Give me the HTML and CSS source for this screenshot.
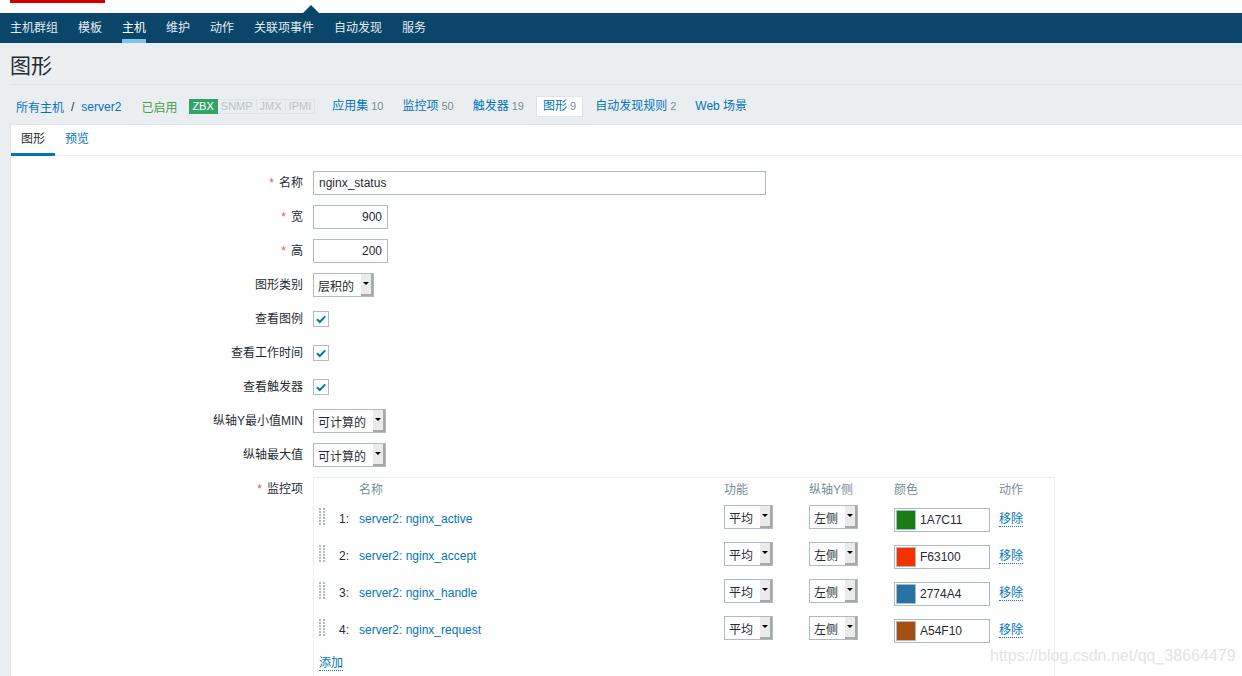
FILE: index.html
```html
<!DOCTYPE html>
<html lang="zh-CN">
<head>
<meta charset="utf-8">
<title>图形</title>
<link rel="stylesheet" href="styles.css">
</head>
<body>
<header class="topbar"><div class="brand-bar"></div><span class="tip"></span></header>
<nav class="mainnav">
  <a>主机群组</a><a>模板</a><a class="active">主机</a><a>维护</a><a>动作</a><a>关联项事件</a><a>自动发现</a><a>服务</a>
</nav>
<main class="page">
  <h1 class="title">图形</h1>
  <div class="crumbs">
    <a class="link">所有主机</a><span class="sep">/</span><a class="link">server2</a>
    <span class="status">已启用</span>
    <span class="avail"><span class="zbx">ZBX</span><span>SNMP</span><span>JMX</span><span>IPMI</span></span>
    <a class="citem first">应用集<span class="count">10</span></a>
    <a class="citem">监控项<span class="count">50</span></a>
    <a class="citem">触发器<span class="count">19</span></a>
    <span class="citem selected">图形<span class="count">9</span></span>
    <a class="citem">自动发现规则<span class="count">2</span></a>
    <a class="citem">Web 场景</a>
  </div>
  <section class="panel">
    <div class="tabs"><span class="tab active">图形</span><a class="tab link">预览</a></div>
    <div class="form">
      <div class="lbl"><span class="req">*</span>名称</div>
      <div class="field"><span class="input w453">nginx_status</span></div>

      <div class="lbl"><span class="req">*</span>宽</div>
      <div class="field"><span class="input w75 num">900</span></div>

      <div class="lbl"><span class="req">*</span>高</div>
      <div class="field"><span class="input w75 num">200</span></div>

      <div class="lbl">图形类别</div>
      <div class="field"><span class="select w61"><span class="val">层积的</span><span class="btn"></span></span></div>

      <div class="lbl">查看图例</div>
      <div class="field"><span class="cb"><svg width="12" height="12" viewBox="0 0 12 12"><path d="M2 6.2 L4.8 9 L10.2 3.4" fill="none" stroke="#0275b8" stroke-width="2"/></svg></span></div>

      <div class="lbl">查看工作时间</div>
      <div class="field"><span class="cb"><svg width="12" height="12" viewBox="0 0 12 12"><path d="M2 6.2 L4.8 9 L10.2 3.4" fill="none" stroke="#0275b8" stroke-width="2"/></svg></span></div>

      <div class="lbl">查看触发器</div>
      <div class="field"><span class="cb"><svg width="12" height="12" viewBox="0 0 12 12"><path d="M2 6.2 L4.8 9 L10.2 3.4" fill="none" stroke="#0275b8" stroke-width="2"/></svg></span></div>

      <div class="lbl">纵轴Y最小值MIN</div>
      <div class="field"><span class="select w73"><span class="val">可计算的</span><span class="btn"></span></span></div>

      <div class="lbl">纵轴最大值</div>
      <div class="field"><span class="select w73"><span class="val">可计算的</span><span class="btn"></span></span></div>

      <div class="lbl"><span class="req">*</span>监控项</div>
      <div class="items">
        <div class="irow ihead"><span></span><span></span><span>名称</span><span>功能</span><span>纵轴Y侧</span><span>颜色</span><span>动作</span></div>

        <div class="irow">
          <span class="handle"><svg width="6" height="18" viewBox="0 0 6 18"><g fill="#acbbc4"><rect x="0" y="0" width="2" height="2"/><rect x="4" y="0" width="2" height="2"/><rect x="0" y="3" width="2" height="2"/><rect x="4" y="3" width="2" height="2"/><rect x="0" y="6" width="2" height="2"/><rect x="4" y="6" width="2" height="2"/><rect x="0" y="9" width="2" height="2"/><rect x="4" y="9" width="2" height="2"/><rect x="0" y="12" width="2" height="2"/><rect x="4" y="12" width="2" height="2"/><rect x="0" y="15" width="2" height="2"/><rect x="4" y="15" width="2" height="2"/></g></svg></span>
          <span>1:</span><a class="link">server2: nginx_active</a>
          <span class="cell-sel"><span class="select w49"><span class="val">平均</span><span class="btn"></span></span></span>
          <span class="cell-sel"><span class="select w49"><span class="val">左侧</span><span class="btn"></span></span></span>
          <span class="cell-color"><span class="color"><span class="swatch" style="background:#1A7C11"></span>1A7C11</span></span>
          <span><a class="dlink">移除</a></span>
        </div>

        <div class="irow">
          <span class="handle"><svg width="6" height="18" viewBox="0 0 6 18"><g fill="#acbbc4"><rect x="0" y="0" width="2" height="2"/><rect x="4" y="0" width="2" height="2"/><rect x="0" y="3" width="2" height="2"/><rect x="4" y="3" width="2" height="2"/><rect x="0" y="6" width="2" height="2"/><rect x="4" y="6" width="2" height="2"/><rect x="0" y="9" width="2" height="2"/><rect x="4" y="9" width="2" height="2"/><rect x="0" y="12" width="2" height="2"/><rect x="4" y="12" width="2" height="2"/><rect x="0" y="15" width="2" height="2"/><rect x="4" y="15" width="2" height="2"/></g></svg></span>
          <span>2:</span><a class="link">server2: nginx_accept</a>
          <span class="cell-sel"><span class="select w49"><span class="val">平均</span><span class="btn"></span></span></span>
          <span class="cell-sel"><span class="select w49"><span class="val">左侧</span><span class="btn"></span></span></span>
          <span class="cell-color"><span class="color"><span class="swatch" style="background:#F63100"></span>F63100</span></span>
          <span><a class="dlink">移除</a></span>
        </div>

        <div class="irow">
          <span class="handle"><svg width="6" height="18" viewBox="0 0 6 18"><g fill="#acbbc4"><rect x="0" y="0" width="2" height="2"/><rect x="4" y="0" width="2" height="2"/><rect x="0" y="3" width="2" height="2"/><rect x="4" y="3" width="2" height="2"/><rect x="0" y="6" width="2" height="2"/><rect x="4" y="6" width="2" height="2"/><rect x="0" y="9" width="2" height="2"/><rect x="4" y="9" width="2" height="2"/><rect x="0" y="12" width="2" height="2"/><rect x="4" y="12" width="2" height="2"/><rect x="0" y="15" width="2" height="2"/><rect x="4" y="15" width="2" height="2"/></g></svg></span>
          <span>3:</span><a class="link">server2: nginx_handle</a>
          <span class="cell-sel"><span class="select w49"><span class="val">平均</span><span class="btn"></span></span></span>
          <span class="cell-sel"><span class="select w49"><span class="val">左侧</span><span class="btn"></span></span></span>
          <span class="cell-color"><span class="color"><span class="swatch" style="background:#2774A4"></span>2774A4</span></span>
          <span><a class="dlink">移除</a></span>
        </div>

        <div class="irow">
          <span class="handle"><svg width="6" height="18" viewBox="0 0 6 18"><g fill="#acbbc4"><rect x="0" y="0" width="2" height="2"/><rect x="4" y="0" width="2" height="2"/><rect x="0" y="3" width="2" height="2"/><rect x="4" y="3" width="2" height="2"/><rect x="0" y="6" width="2" height="2"/><rect x="4" y="6" width="2" height="2"/><rect x="0" y="9" width="2" height="2"/><rect x="4" y="9" width="2" height="2"/><rect x="0" y="12" width="2" height="2"/><rect x="4" y="12" width="2" height="2"/><rect x="0" y="15" width="2" height="2"/><rect x="4" y="15" width="2" height="2"/></g></svg></span>
          <span>4:</span><a class="link">server2: nginx_request</a>
          <span class="cell-sel"><span class="select w49"><span class="val">平均</span><span class="btn"></span></span></span>
          <span class="cell-sel"><span class="select w49"><span class="val">左侧</span><span class="btn"></span></span></span>
          <span class="cell-color"><span class="color"><span class="swatch" style="background:#A54F10"></span>A54F10</span></span>
          <span><a class="dlink">移除</a></span>
        </div>

        <div class="addrow"><a class="dlink">添加</a></div>
      </div>
    </div>
  </section>
</main>
<div class="watermark">https://blog.csdn.net/qq_38664479</div>
</body>
</html>
```
FILE: styles.css
```css
html, body {
  margin: 0;
  padding: 0;
}
body {
  font-family: "Liberation Sans", Arial, "Noto Sans CJK SC", sans-serif;
  font-size: 12px;
  color: #1f2c33;
  background: #ebeef1;
  overflow: hidden;
}
a { text-decoration: none; cursor: pointer; }

.topbar {
  position: relative;
  height: 13px;
  background: #fff;
}
.brand-bar {
  margin-left: 10px;
  width: 95px;
  height: 3px;
  background: #d40000;
}
.tip {
  position: absolute;
  left: 303px;
  top: 5px;
  width: 0;
  height: 0;
  border-left: 8px solid transparent;
  border-right: 8px solid transparent;
  border-bottom: 8px solid #0a466a;
}

.mainnav {
  display: flex;
  gap: 20px;
  height: 30px;
  padding-left: 10px;
  background: #0a466a;
}
.mainnav a {
  display: block;
  height: 30px;
  line-height: 30px;
  color: #e4ebf0;
}
.mainnav a.active {
  color: #fff;
  box-shadow: inset 0 -4px 0 #7ec5ec;
}

.page {
  padding-left: 10px;
}
.title {
  margin: 0;
  height: 35px;
  padding-top: 6px;
  line-height: 34px;
  font-size: 21px;
  font-weight: normal;
  color: #1f2c33;
  border-bottom: 1px solid #dfe4e7;
}

.crumbs {
  display: flex;
  align-items: center;
  height: 35px;
  padding: 4px 0 0 6px;
}
.link { color: #0275b8; }
.sep { margin: 0 7px; }
.status { color: #429e47; margin-left: 20px; }
.avail {
  display: flex;
  margin-left: 12px;
  font-size: 11px;
}
.avail span {
  height: 15px;
  box-sizing: border-box;
  line-height: 13px;
  padding: 0 3px;
  border: 1px solid #dfe4e7;
  border-left: 0;
  color: #b7c3ca;
}
.avail .zbx {
  background: #34a36a;
  border-color: #34a36a;
  color: #fff;
  padding: 0 3px;
}
.citem {
  display: block;
  height: 21px;
  box-sizing: border-box;
  line-height: 19px;
  padding: 0 6px;
  margin-left: 5px;
  border: 1px solid transparent;
  color: #0275b8;
  white-space: nowrap;
}
.citem.first { margin-left: 10px; }
.citem.selected {
  background: #fff;
  border-color: #dfe4e7;
  color: #0275b8;
}
.count {
  color: #768d99;
  font-size: 11px;
  margin-left: 3px;
}

.panel {
  background: #fff;
  border: 1px solid #dfe4e7;
  border-right: 0;
  min-height: 560px;
}
.tabs {
  display: flex;
  height: 30px;
  border-bottom: 1px solid #ebeef1;
}
.tab {
  display: block;
  height: 31px;
  box-sizing: border-box;
  padding: 0 10px;
  line-height: 28px;
}
.tab.active {
  color: #1f2c33;
  box-shadow: inset 0 -3px 0 #0275b8;
}

.form {
  display: grid;
  grid-template-columns: 292px 1fr;
  column-gap: 10px;
  row-gap: 10px;
  padding-top: 15px;
}
.lbl {
  text-align: right;
  line-height: 24px;
  white-space: nowrap;
}
.req {
  color: #e45959;
  margin-right: 5px;
}
.field {
  display: flex;
  align-items: center;
  height: 24px;
}
.input {
  display: block;
  height: 24px;
  box-sizing: border-box;
  border: 1px solid #acbbc4;
  padding: 0 5px;
  line-height: 22px;
  background: #fff;
}
.w453 { width: 453px; }
.w75 { width: 75px; }
.num { text-align: right; }

.select {
  display: flex;
  justify-content: space-between;
  height: 24px;
  box-sizing: border-box;
  border: 1px solid #acbbc4;
  padding-left: 4px;
  background: #fff;
}
.w61 { width: 61px; }
.w73 { width: 73px; }
.w49 { width: 49px; }
.select .val {
  line-height: 20px;
  padding-top: 3px;
  white-space: nowrap;
}
.select .btn {
  position: relative;
  width: 12px;
  height: 22px;
  box-sizing: border-box;
  background: #ebebeb;
  border-right: 2px solid #a8a8a8;
  border-bottom: 2px solid #a8a8a8;
}
.select .btn::after {
  content: "";
  position: absolute;
  left: 2px;
  top: 8px;
  border-left: 3px solid transparent;
  border-right: 3px solid transparent;
  border-top: 3px solid #000;
}

.cb {
  display: flex;
  align-items: center;
  justify-content: center;
  width: 16px;
  height: 16px;
  box-sizing: border-box;
  border: 1px solid #acbbc4;
  background: #fff;
}

.items {
  width: 742px;
  box-sizing: border-box;
  border: 1px solid #ebeef1;
  border-bottom: 0;
  padding: 0 5px;
  height: 210px;
}
.irow {
  display: grid;
  grid-template-columns: 20px 20px 365px 85px 85px 105px 1fr;
  height: 37px;
  line-height: 37px;
  align-items: start;
  white-space: nowrap;
}
.irow.ihead {
  height: 23px;
  padding-top: 1px;
  box-sizing: border-box;
  line-height: 22px;
  color: #768d99;
}
.handle {
  display: block;
  height: 18px;
  margin-top: 7px;
  line-height: 0;
}
.cell-sel {
  display: block;
  margin-top: 4px;
  line-height: normal;
}
.cell-color {
  display: block;
  margin-top: 7px;
  line-height: normal;
}
.color {
  display: flex;
  align-items: center;
  gap: 4px;
  width: 96px;
  height: 24px;
  box-sizing: border-box;
  border: 1px solid #acbbc4;
  padding-left: 1px;
}
.swatch {
  display: block;
  width: 20px;
  height: 20px;
  box-sizing: border-box;
  border: 1px solid #acbbc4;
}
.dlink {
  color: #0275b8;
  border-bottom: 1px dotted #0275b8;
}
.addrow {
  height: 28px;
  line-height: 28px;
}

.watermark {
  position: absolute;
  left: 990px;
  top: 647px;
  font-size: 16px;
  color: #e2e4e6;
  white-space: nowrap;
}
```
